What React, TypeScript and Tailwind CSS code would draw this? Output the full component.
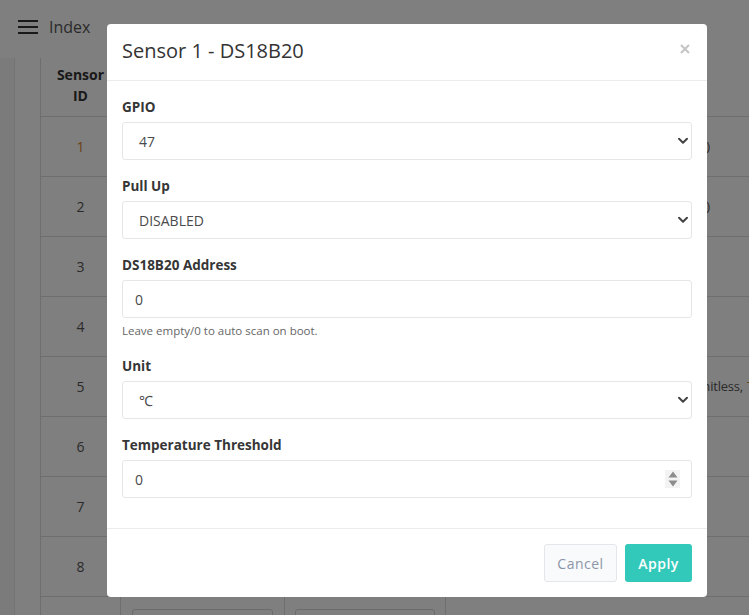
import React from "react";

const sans = "font-['Open_Sans','Noto_Sans',sans-serif]";

function Chevron() {
  return (
    <svg
      className="pointer-events-none absolute right-[4px] top-1/2 -translate-y-1/2"
      width="10"
      height="7"
      viewBox="0 0 10 7"
      fill="none"
    >
      <path d="M1 1.2 5 5.2 9 1.2" stroke="#444" strokeWidth="2" strokeLinecap="round" strokeLinejoin="round" />
    </svg>
  );
}

function Spinner() {
  return (
    <div className="pointer-events-none absolute right-[12px] top-1/2 flex h-[18px] w-[15px] -translate-y-1/2 flex-col items-center justify-between bg-[#f3f3f3] py-[1px]">
      <svg width="10" height="7" viewBox="0 0 10 7">
        <path d="M5 0.5 9.5 6.5H0.5Z" fill="#8c8c8c" />
      </svg>
      <svg width="10" height="7" viewBox="0 0 10 7">
        <path d="M0.5 0.5H9.5L5 6.5Z" fill="#8c8c8c" />
      </svg>
    </div>
  );
}

function Label({ children }: { children: React.ReactNode }) {
  return <label className="mb-[5px] block text-[13.5px] font-bold leading-[20px] text-[#363636]">{children}</label>;
}

function SelectField({ label, value, options }: { label: string; value: string; options: string[] }) {
  return (
    <div className="mb-4">
      <Label>{label}</Label>
      <div className="relative">
        <select
          defaultValue={value}
          className="h-[38px] w-full appearance-none rounded-[3px] border border-[#e6e6e6] bg-white pl-[16px] text-[14px] text-[#4a4a4a] outline-none"
        >
          {options.map((o) => (
            <option key={o} value={o}>
              {o}
            </option>
          ))}
        </select>
        <Chevron />
      </div>
    </div>
  );
}

function TextField({
  label,
  value,
  help,
  spinner,
  last,
}: {
  label: string;
  value: string;
  help?: string;
  spinner?: boolean;
  last?: boolean;
}) {
  return (
    <div className={last ? "" : "mb-4"}>
      <Label>{label}</Label>
      <div className="relative">
        <input
          type="text"
          defaultValue={value}
          className="h-[38px] w-full rounded-[3px] border border-[#e6e6e6] bg-white pl-[12px] text-[14px] text-[#4a4a4a] outline-none"
        />
        {spinner && <Spinner />}
      </div>
      {help && <p className="mt-[4px] text-[11.5px] leading-[18px] text-[#666]">{help}</p>}
    </div>
  );
}

const rows = [1, 2, 3, 4, 5, 6, 7, 8, 9];

function SensorRow({ id }: { id: number }) {
  return (
    <div className="flex h-[60px] border-b border-[#dcdcdc]">
      <div
        className={`flex w-[80px] shrink-0 items-center justify-center border-r border-[#dcdcdc] text-[14px] ${
          id === 1 ? "text-[#d9822b]" : "text-[#555]"
        }`}
      >
        {id}
      </div>
      <div className="w-[164px] shrink-0 border-r border-[#dcdcdc] px-[11px] pt-[12px]">
        <div className="h-[34px] rounded-[3px] border border-[#d6d6d6]" />
      </div>
      <div className="w-[161px] shrink-0 border-r border-[#dcdcdc] px-[10px] pt-[12px]">
        <div className="h-[34px] rounded-[3px] border border-[#d6d6d6]" />
      </div>
      <div className="flex w-[420px] shrink-0 items-center whitespace-nowrap pl-[12px] text-[13px] tracking-[-0.2px] text-[#555]">
        {id === 1 || id === 2 ? (
          <span className="inline-block w-[252px] text-right">DS18B20 (GPIO 4{id + 6}, addr 0)</span>
        ) : id === 5 ? (
          <>
            <span className="inline-block w-[285px] text-right">Analog (Unitless,</span>
            <span className="ml-[4px] text-[#d9822b]">Threshold</span>
          </>
        ) : null}
      </div>
    </div>
  );
}

export default function App() {
  return (
    <div className={`relative h-[615px] w-[749px] overflow-hidden bg-white ${sans}`}>
      {/* top bar */}
      <header className="flex h-[58px] items-center pb-[5px] pl-[18px]">
        <svg width="20" height="16" viewBox="0 0 20 16">
          <rect x="0" y="1" width="20" height="2" fill="#333" />
          <rect x="0" y="7" width="20" height="2" fill="#333" />
          <rect x="0" y="13" width="20" height="2" fill="#333" />
        </svg>
        <span className="ml-[11px] text-[16px] text-[#555]">Index</span>
      </header>

      <div className="flex">
        <aside className="h-[557px] w-[15px] shrink-0 border-r border-[#e8e8e8] bg-[#f6f6f6]" />
        <main className="shrink-0 pl-[25px]">
          <div className="w-[826px] border-l border-[#dcdcdc]">
            <div className="flex h-[59px] border-b border-[#dcdcdc]">
              <div className="flex w-[80px] shrink-0 items-end justify-center border-r border-[#dcdcdc] pb-[10px] text-center text-[14px] font-bold leading-[21px] text-[#333]">
                Sensor
                <br />
                ID
              </div>
              <div className="w-[164px] shrink-0 border-r border-[#dcdcdc]" />
              <div className="w-[161px] shrink-0 border-r border-[#dcdcdc]" />
              <div className="w-[420px] shrink-0" />
            </div>
            {rows.map((r) => (
              <SensorRow key={r} id={r} />
            ))}
          </div>
        </main>
      </div>

      {/* backdrop */}
      <div className="absolute inset-0 bg-black/50" />

      {/* dialog */}
      <div className="absolute left-[107px] top-[24px] w-[600px] rounded-[4px] bg-white">
        <div className="flex h-[57px] items-center justify-between border-b border-[#ececec] pl-[15px] pr-[17px]">
          <h2 className="pb-[3px] text-[20px] text-[#333]">Sensor 1 - DS18B20</h2>
          <svg className="mb-[6px]" width="10" height="10" viewBox="0 0 10 10">
            <path d="M1 1 9 9M9 1 1 9" stroke="#c6c6c6" strokeWidth="2.2" />
          </svg>
        </div>

        <div className="px-[15px] pb-[30px] pt-[16px]">
          <SelectField label="GPIO" value="47" options={["46", "47", "48"]} />
          <SelectField label="Pull Up" value="DISABLED" options={["DISABLED", "ENABLED"]} />
          <TextField label="DS18B20 Address" value="0" help="Leave empty/0 to auto scan on boot." />
          <SelectField label="Unit" value="℃" options={["℃", "℉"]} />
          <TextField label="Temperature Threshold" value="0" spinner last />
        </div>

        <div className="flex justify-end gap-2 border-t border-[#ececec] px-[15px] py-[15px]">
          <button className="h-[38px] w-[73px] rounded-[3px] border border-[#e3e6ea] bg-[#f8fafc] text-[14px] tracking-[0.5px] text-[#8c95a6]">
            Cancel
          </button>
          <button className="h-[38px] w-[67px] rounded-[3px] bg-[#33c9ba] text-[14px] font-semibold tracking-[0.5px] text-white">
            Apply
          </button>
        </div>
      </div>
    </div>
  );
}
